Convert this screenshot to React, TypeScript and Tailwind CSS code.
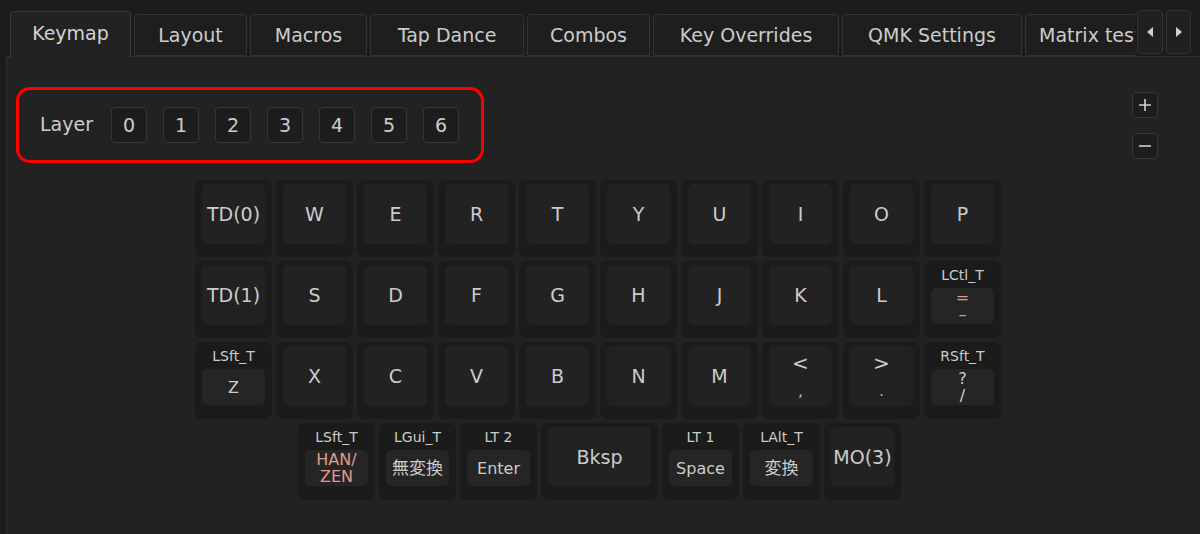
import React from "react"

type KeyDef = {
    label?: string
    top?: string
    lines?: string[]
    accent?: boolean
    jp?: boolean
    wide?: boolean
}

const font = { fontFamily: '"DejaVu Sans", "Noto Sans CJK JP", sans-serif' }

const tabs = [
    { name: "Layout", w: "w-[113px]" },
    { name: "Macros", w: "w-[117px]" },
    { name: "Tap Dance", w: "w-[154px]" },
    { name: "Combos", w: "w-[123px]" },
    { name: "Key Overrides", w: "w-[186px]" },
    { name: "QMK Settings", w: "w-[180px]" },
    { name: "Matrix tester", w: "w-[150px]" },
]

const rows: KeyDef[][] = [
    [{ label: "TD(0)" }, { label: "W" }, { label: "E" }, { label: "R" }, { label: "T" }, { label: "Y" }, { label: "U" }, { label: "I" }, { label: "O" }, { label: "P" }],
    [{ label: "TD(1)" }, { label: "S" }, { label: "D" }, { label: "F" }, { label: "G" }, { label: "H" }, { label: "J" }, { label: "K" }, { label: "L" }, { top: "LCtl_T", lines: ["=", "–"], accent: true }],
    [{ top: "LSft_T", lines: ["Z"] }, { label: "X" }, { label: "C" }, { label: "V" }, { label: "B" }, { label: "N" }, { label: "M" }, { lines: ["<", ","] }, { lines: [">", "."] }, { top: "RSft_T", lines: ["?", "/"] }],
    [{ top: "LSft_T", lines: ["HAN/", "ZEN"], accent: true }, { top: "LGui_T", lines: ["無変換"], jp: true }, { top: "LT 2", lines: ["Enter"] }, { label: "Bksp", wide: true }, { top: "LT 1", lines: ["Space"] }, { top: "LAlt_T", lines: ["変換"], jp: true }, { label: "MO(3)" }],
]

const Key = ({ k }: { k: KeyDef }) => {
    const outer = `${k.wide ? "w-[117px]" : "w-[77px]"} h-[77px] rounded-[7px] bg-[#1b1b1b] flex flex-col items-center`
    if (k.top) {
        return (
            <div className={`${outer} px-[7px] pb-[14px]`}>
                <div className="h-[27px] flex items-center text-[14px] text-[#cccccc] leading-none">{k.top}</div>
                <div className={`w-full flex-1 rounded-[5px] bg-[#252525] flex flex-col items-center justify-center leading-[17px] ${k.jp ? "text-[17px]" : "text-[16px]"} ${k.accent ? "text-[#e09c86]" : "text-[#cccccc]"}`}>
                    {k.lines?.map((l, i) => <span key={i}>{l}</span>)}
                </div>
            </div>
        )
    }
    return (
        <div className={`${outer} px-[7px] pt-[4px] pb-[13px]`}>
            <div className="w-full flex-1 rounded-[5px] bg-[#222222] flex flex-col items-center justify-center text-[#cccccc]">
                {k.label
                    ? <span className="text-[19px]">{k.label}</span>
                    : k.lines?.map((l, i) => <span key={i} className={i === 0 ? "text-[20px] leading-[22px]" : "text-[14px] leading-[18px] mt-[8px]"}>{l}</span>)}
            </div>
        </div>
    )
}

const App = () => {
    return (
        <div className="w-[1200px] h-[534px] bg-[#1c1c1c] flex flex-col overflow-hidden" style={font}>
            <div className="flex items-end h-[56px] pt-[10px] pl-[10px]">
                <div className="w-[121px] h-[46px] rounded-t-[4px] border border-b-0 border-[#3a3a3a] bg-[#222222] flex items-center justify-center text-[19px] text-[#d2d2d2] relative z-10 mb-[-1px] pb-[2px]">Keymap</div>
                <div className="flex items-end w-[1004px] overflow-hidden">
                    {tabs.map(t => (
                        <div key={t.name} className={`${t.w} shrink-0 h-[42px] ml-[3px] rounded-t-[4px] border border-[#333333] bg-[#1e1e1e] flex items-center justify-center text-[19px] text-[#cccccc] whitespace-nowrap`}>{t.name}</div>
                    ))}
                </div>
                <div className="flex self-start gap-[3px] ml-[2px]">
                    <div className="w-[26px] h-[44px] rounded-[4px] border border-[#333333] bg-[#202020] flex items-center justify-center">
                        <svg width="8" height="10" viewBox="0 0 8 10"><path d="M7 0 L1 5 L7 10 Z" fill="#cfcfcf" /></svg>
                    </div>
                    <div className="w-[25px] h-[44px] rounded-[4px] border border-[#333333] bg-[#202020] flex items-center justify-center">
                        <svg width="8" height="10" viewBox="0 0 8 10"><path d="M1 0 L7 5 L1 10 Z" fill="#cfcfcf" /></svg>
                    </div>
                </div>
            </div>
            <div className="flex-1 ml-[6px] border-l border-t border-[#303030] bg-[#222222] flex flex-col">
                <div className="flex justify-between items-start pt-[30px] pl-[9px]">
                    <div className="w-[468px] h-[76px] rounded-[14px] border-[3px] border-[#ff0000] flex items-center pl-[21px]">
                        <span className="text-[19px] text-[#cccccc] mr-[18px] pb-[2px]">Layer</span>
                        <div className="flex gap-[16px]">
                            {["0", "1", "2", "3", "4", "5", "6"].map(n => (
                                <div key={n} className="w-[36px] h-[36px] rounded-[4px] border border-[#363636] bg-[#1d1d1d] flex items-center justify-center text-[19px] text-[#cccccc]">{n}</div>
                            ))}
                        </div>
                    </div>
                    <div className="flex flex-col gap-[15px] mt-[5px] mr-[42px]">
                        <div className="w-[26px] h-[26px] rounded-[4px] border border-[#363636] bg-[#1d1d1d] flex items-center justify-center">
                            <svg width="12" height="12" viewBox="0 0 12 12"><path d="M6 0 V12 M0 6 H12" stroke="#d0d0d0" strokeWidth="1.6" /></svg>
                        </div>
                        <div className="w-[26px] h-[26px] rounded-[4px] border border-[#363636] bg-[#1d1d1d] flex items-center justify-center">
                            <svg width="12" height="12" viewBox="0 0 12 12"><path d="M0 6 H12" stroke="#d0d0d0" strokeWidth="1.6" /></svg>
                        </div>
                    </div>
                </div>
                <div className="flex flex-col gap-[4px] mt-[17px] ml-[188px]">
                    {rows.map((row, ri) => (
                        <div key={ri} className={`flex gap-[4px] ${ri === 3 ? "ml-[103px]" : ""}`}>
                            {row.map((k, ki) => <Key key={ki} k={k} />)}
                        </div>
                    ))}
                </div>
            </div>
        </div>
    )
}

export default App
